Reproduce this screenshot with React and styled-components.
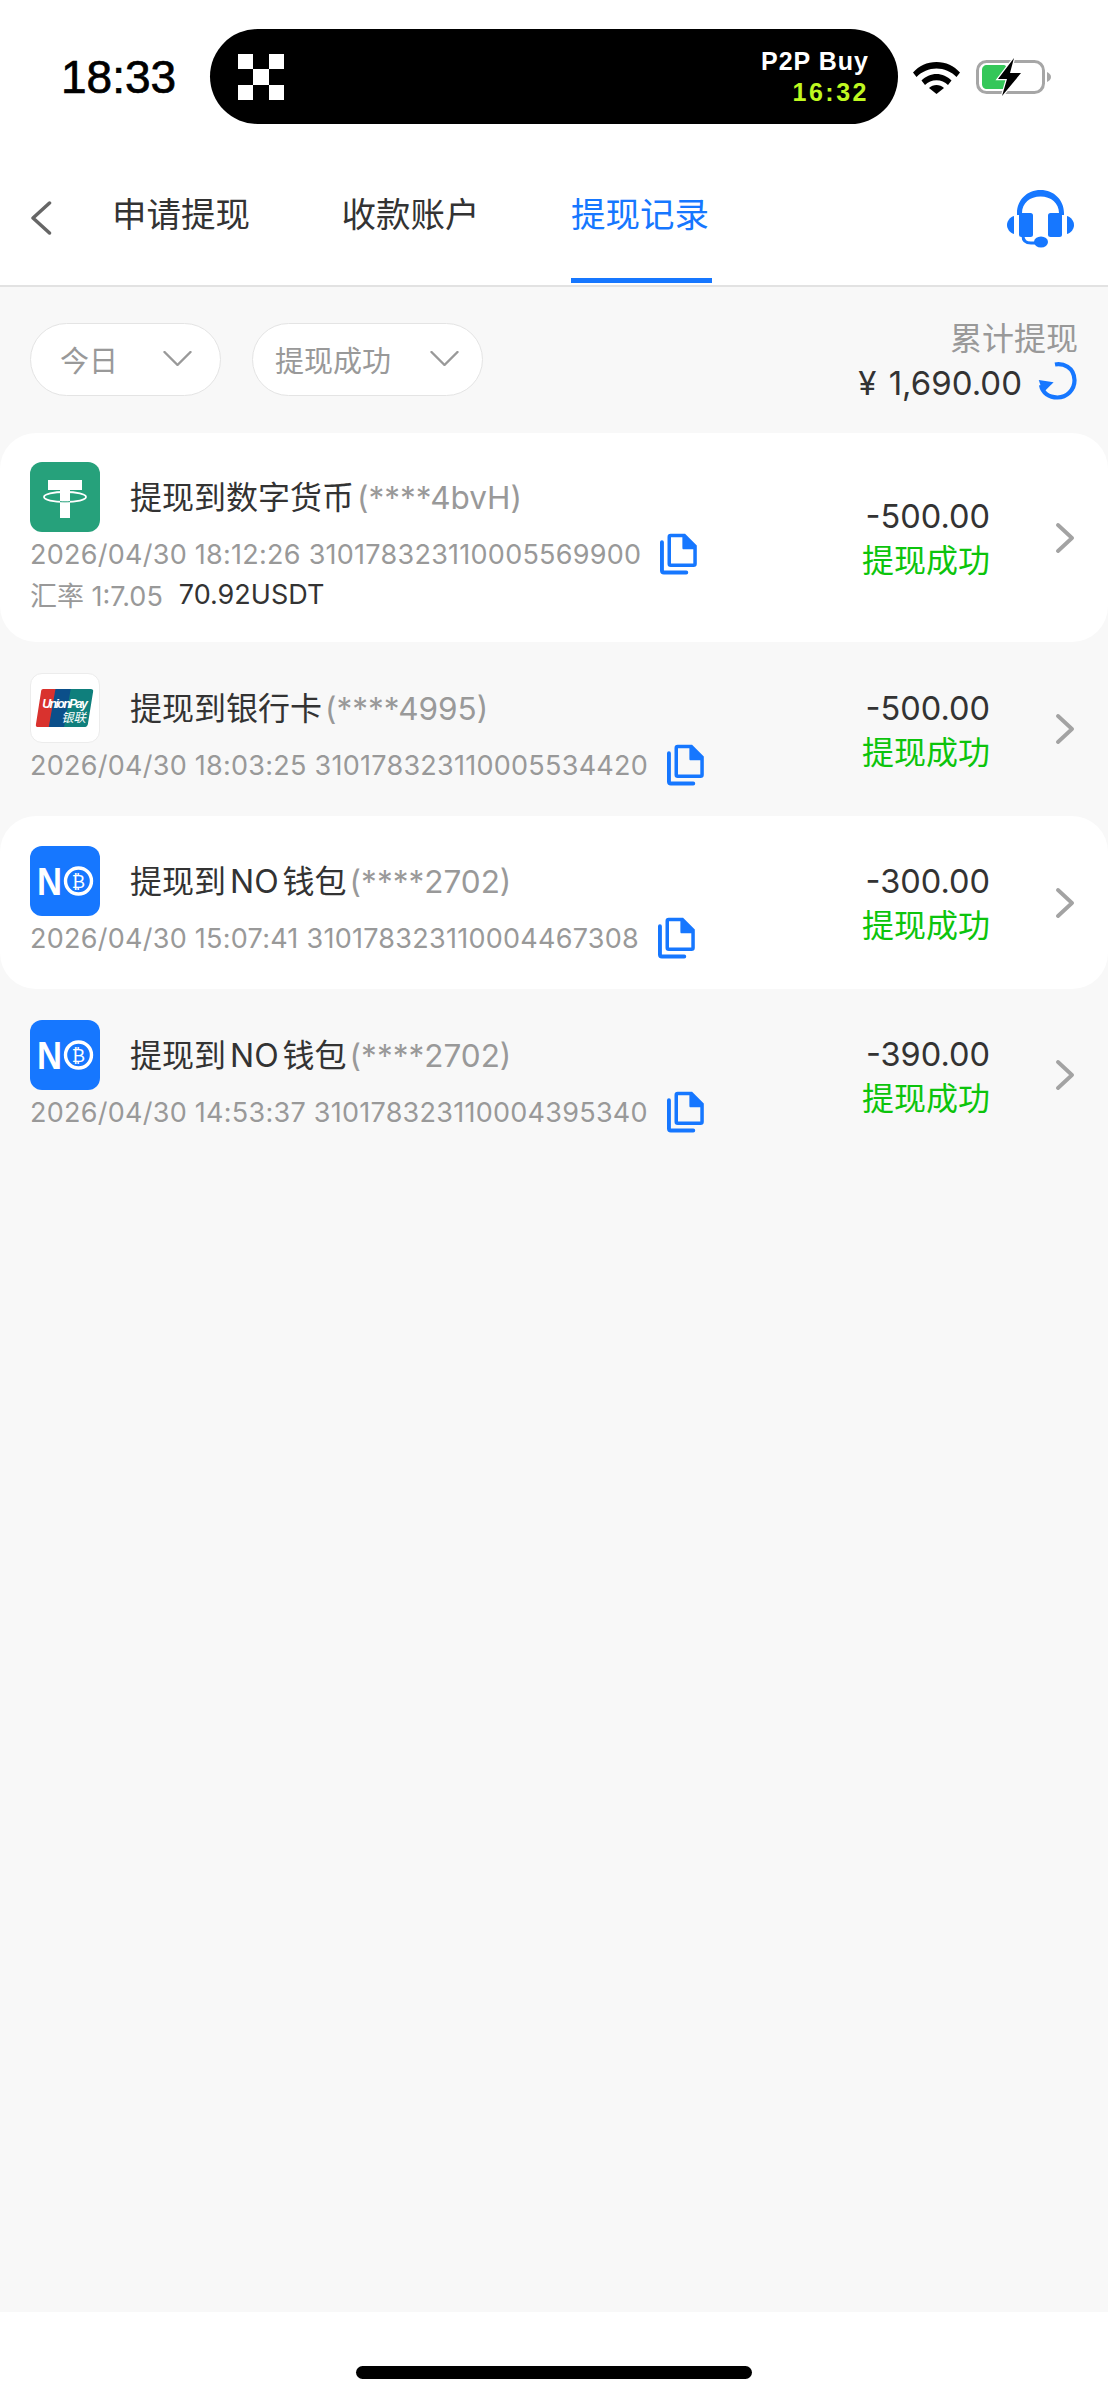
import React from 'react';
import styled, { createGlobalStyle } from 'styled-components';

const FONT = 'Inter, "Noto Sans CJK SC", sans-serif';
const BLUE = '#1677ff';

const Global = createGlobalStyle`
  html, body { margin: 0; padding: 0; background: #fff; }
  body { font-family: ${FONT}; }
  * { box-sizing: border-box; }
`;

const Page = styled.div`
  width: 1108px;
  min-height: 2400px;
  display: flex;
  flex-direction: column;
  background: #f8f8f8;
`;

const Top = styled.header`
  background: #fff;
  border-bottom: 2px solid #e2e2e2;
`;

const StatusBar = styled.div`
  height: 153px;
  display: flex;
  align-items: flex-start;
  padding-top: 29px;
`;

const Clock = styled.div`
  width: 210px;
  height: 95px;
  padding-left: 61px;
  display: flex;
  align-items: center;
  font-family: "Liberation Sans", sans-serif;
  font-size: 46px;
  color: #000;
  -webkit-text-stroke: 0.7px #000;
`;

const Island = styled.div`
  width: 688px;
  height: 95px;
  border-radius: 47.5px;
  background: #000;
  display: flex;
  align-items: center;
  justify-content: space-between;
  padding: 0 29px 0 28px;
`;

const LiveText = styled.div`
  display: flex;
  flex-direction: column;
  align-items: flex-end;
  gap: 3px;
`;

const LiveLine = styled.div`
  font-family: "Liberation Sans", sans-serif;
  font-size: 25px;
  line-height: 28px;
  font-weight: 700;
  letter-spacing: ${p => p.$ls}px;
  color: ${p => p.$color};
`;

const StatusIcons = styled.div`
  display: flex;
  align-items: center;
  height: 95px;
  padding-left: 15px;
  gap: 16px;
`;

const TabBar = styled.nav`
  height: 132px;
  display: flex;
  align-items: flex-start;
  padding: 0 34px 0 30px;
`;

const BackButton = styled.div`
  width: 82px;
  height: 84px;
  padding-top: 48px;
  display: flex;
`;

const Tabs = styled.div`
  display: flex;
  gap: 93.5px;
  flex: 1;
`;

const Tab = styled.div`
  width: ${p => (p.$active ? '141px' : '136px')};
  height: 130px;
  padding-top: 38px;
  font-size: 34.5px;
  line-height: 48px;
  white-space: nowrap;
  color: ${p => (p.$active ? BLUE : '#333')};
  border-bottom: 5px solid ${p => (p.$active ? BLUE : 'transparent')};
`;

const Support = styled.div`
  padding-top: 37px;
  display: flex;
`;

const FilterBar = styled.div`
  height: 146px;
  padding: 36px 30px 0;
  display: flex;
  justify-content: space-between;
  align-items: flex-start;
`;

const Filters = styled.div`
  display: flex;
  gap: 31px;
`;

const Filter = styled.div`
  height: 73px;
  width: ${p => p.$w}px;
  padding: 0 ${p => p.$pr}px 2px ${p => p.$pl}px;
  border-radius: 36.5px;
  background: #fff;
  border: 1.5px solid #e4e4e4;
  display: flex;
  align-items: center;
  justify-content: space-between;
  font-size: 29px;
  color: #999;
`;

const Total = styled.div`
  display: flex;
  flex-direction: column;
  align-items: flex-end;
  margin-top: -6px;
`;

const TotalLabel = styled.div`
  font-size: 32px;
  line-height: 44px;
  color: #999;
`;

const TotalValue = styled.div`
  display: flex;
  align-items: center;
  gap: 16px;
  font-size: 33px;
  line-height: 44px;
  word-spacing: 3px;
  color: #333;

  svg {
    margin: -6px 1px 0 0;
  }
`;

const Records = styled.main`
  flex: 1;
  display: flex;
  flex-direction: column;
`;

const Record = styled.article`
  height: ${p => p.$h}px;
  padding: ${p => p.$pt}px 33px 0 30px;
  display: flex;
  justify-content: space-between;
  background: ${p => (p.$white ? '#fff' : 'transparent')};
  border-radius: 36px;
`;

const RecordMain = styled.div`
  display: flex;
  flex-direction: column;
`;

const TitleRow = styled.div`
  display: flex;
  align-items: center;
  gap: 30px;
`;

const LogoBox = styled.div`
  width: 70px;
  height: 70px;
  border-radius: 12px;
  background: ${p => p.$bg};
  border: ${p => (p.$bordered ? '1px solid #ececec' : 'none')};
  display: flex;
  align-items: center;
  justify-content: center;
  overflow: hidden;
`;

const Title = styled.div`
  padding-top: 2px;
  font-size: 32px;
  line-height: 44px;
  color: #333;
  white-space: nowrap;
`;

const Latin = styled.span`
  margin: 0 4px;
`;

const Masked = styled.span`
  color: #999;
  margin-left: 3px;
  font-size: 31.5px;
`;

const Meta = styled.div`
  height: 42px;
  margin-top: 1px;
  display: flex;
  align-items: center;
  gap: 19px;
  font-size: 27px;
  letter-spacing: 0.26px;
  color: #999;
  white-space: nowrap;
`;

const Rate = styled.div`
  height: 38px;
  display: flex;
  align-items: center;
  gap: 16px;
  font-size: 27px;
  color: #999;
  white-space: nowrap;
`;

const RateValue = styled.span`
  color: #333;
`;

const RecordSide = styled.div`
  display: flex;
  align-items: center;
  gap: 65px;
  margin-top: ${p => -p.$pt}px;
`;

const AmountCol = styled.div`
  display: flex;
  flex-direction: column;
  align-items: flex-end;
  padding-top: 3px;
`;

const Amount = styled.div`
  font-size: 32.5px;
  line-height: 44px;
  color: #333;
`;

const State = styled.div`
  font-size: 32px;
  line-height: 44px;
  color: #0cc40c;
`;

const Arrow = styled.div`
  display: flex;
`;

const Footer = styled.footer`
  height: 88px;
  background: #fff;
  display: flex;
  justify-content: center;
  padding-top: 54px;
`;

const HomeBar = styled.div`
  width: 396px;
  height: 13px;
  border-radius: 7px;
  background: #000;
`;

const Checker = () => (
  <svg width="46" height="46" viewBox="0 0 3 3" shapeRendering="crispEdges">
    <path fill="#fff" d="M0 0h1v1H0zM2 0h1v1H2zM1 1h1v1H1zM0 2h1v1H0zM2 2h1v1H2z" />
  </svg>
);

const Wifi = () => (
  <svg width="47" height="34" viewBox="0 0 47 34">
    <path d="M0 12.500C6 6 14 2 23.500 2S41 6 47 12.500L43.500 17C38 11.500 31 8.500 23.500 8.500S9 11.500 3.500 17Z" fill="#000" />
    <path d="M8.500 20.500C12.500 16.500 18 14 23.500 14s11 2.500 15 6.500L35 25c-3-3-7-4.800-11.500-4.800S15 22 12 25Z" fill="#000" />
    <path d="M16 28c2-2 4.800-3 7.500-3s5.500 1 7.500 3L23.500 34Z" fill="#000" />
  </svg>
);

const Battery = () => (
  <svg width="76" height="38" viewBox="0 0 76 38">
    <rect x="1.500" y="3.500" width="66" height="31" rx="9" fill="none" stroke="#a6a6a6" strokeWidth="3" />
    <path d="M71 14c2.500 1 4 3 4 5s-1.500 4-4 5Z" fill="#a6a6a6" />
    <path d="M11 7h16c3 0 3 1 3 3v18c0 1-1 3-3 3H11c-3 0-5-2-5-5V12c0-3 2-5 5-5Z" fill="#34c759" />
    <path d="M38 0 22 21h9l-5 17 19-23H34Z" fill="#000" stroke="#fff" strokeWidth="2.500" paintOrder="stroke" />
  </svg>
);

const Back = () => (
  <svg width="22" height="34" viewBox="0 0 22 34" fill="none">
    <path d="M19.500 2 3 17l16.500 15" stroke="#666" strokeWidth="3.500" strokeLinecap="round" strokeLinejoin="round" />
  </svg>
);

const Headset = () => (
  <svg width="67" height="58" viewBox="0 0 67 58">
    <path d="M15 23V25H10V23C10 10 20 0 33.500 0S57 10 57 23V25H52V23C52 13 44 6.500 33.500 6.500S15 13 15 23Z" fill={BLUE} />
    <rect x="12" y="23" width="14" height="24" rx="2.500" fill={BLUE} />
    <rect x="41" y="23" width="14" height="24" rx="2.500" fill={BLUE} />
    <path d="M7 26V44C3 43 0 39 0 35S3 27 7 26Z" fill={BLUE} />
    <path d="M60 26V44C64 43 67 39 67 35S64 27 60 26Z" fill={BLUE} />
    <path d="M16 46c0 4 2 7 8 7h10" stroke={BLUE} strokeWidth="3" fill="none" />
    <ellipse cx="34" cy="52" rx="7" ry="5.500" fill={BLUE} />
  </svg>
);

const Chevron = () => (
  <svg width="29" height="15" viewBox="0 0 29 15" fill="none">
    <path d="M1.500 1 14.500 14 27.500 1" stroke="#999" strokeWidth="2.400" strokeLinecap="round" strokeLinejoin="round" />
  </svg>
);

const Refresh = () => (
  <svg width="39" height="39" viewBox="0 0 39 39" fill="none">
    <path d="M17 3.500C25 2 36 6 36.500 19c.3 10-8 17.500-17 17.500C11 36.500 4.500 32 3 24" stroke={BLUE} strokeWidth="4.200" />
    <path d="M0 20h15L6 32Z" fill={BLUE} transform="rotate(8 7 25)" />
  </svg>
);

const Copy = () => (
  <svg width="37" height="42" viewBox="0 0 38 42" fill="none">
    <path d="M2 9V38c0 1.500 1 2 2 2H27" stroke={BLUE} strokeWidth="4" strokeLinecap="round" />
    <path d="M11 2H25L36 13V31c0 1-.5 1.500-1.500 1.500H11c-1 0-1.500-.5-1.500-1.500V3.500C9.500 2.500 10 2 11 2Z" stroke={BLUE} strokeWidth="3.600" />
    <path d="M25 2 36 13V16H24c-.5 0-1-.5-1-1V2Z" fill={BLUE} />
  </svg>
);

const ArrowRight = () => (
  <svg width="20" height="30" viewBox="0 0 20 30" fill="none">
    <path d="M3 2 17 15 3 28" stroke="#a3a3a3" strokeWidth="3.800" strokeLinecap="round" strokeLinejoin="round" />
  </svg>
);

const TetherLogo = () => (
  <LogoBox $bg="#26a17b">
    <svg width="70" height="70" viewBox="0 0 70 70">
      <path d="M18 18H52V28H40V56H30V28H18Z" fill="#fff" />
      <ellipse cx="35" cy="35" rx="21" ry="5" fill="none" stroke="#fff" strokeWidth="1.800" />
      <path d="M30 39.600C32 39.900 38 39.900 40 39.600" stroke="#26a17b" strokeWidth="1" fill="none" />
    </svg>
  </LogoBox>
);

const UnionLogo = () => (
  <LogoBox $bg="#fff" $bordered>
    <svg width="60" height="40" viewBox="0 0 62 42">
      <path d="M8 1H24L17 41H3C1 41 0 40 .5 38L6 3C6 2 7 1 8 1Z" fill="#d9322e" />
      <path d="M21 1H41L34 41H14Z" fill="#0b4f8a" />
      <path d="M37 1H58C60 1 61 2 60.500 4L55 38C54.500 40 53 41 51 41H30Z" fill="#0f7f7c" />
      <text x="7" y="21" fontFamily="Liberation Sans" fontSize="13" fontStyle="italic" fontWeight="700" fill="#fff" textLength="48">UnionPay</text>
      <text x="27" y="36" fontFamily="Noto Sans CJK SC" fontSize="13" fontStyle="italic" fill="#fff">银联</text>
    </svg>
  </LogoBox>
);

const NoLogo = () => (
  <LogoBox $bg={BLUE}>
    <svg width="70" height="70" viewBox="0 0 70 70">
      <text x="7" y="49" fontFamily="Liberation Sans" fontSize="39" fontWeight="700" fill="#fff" textLength="25" lengthAdjust="spacingAndGlyphs">N</text>
      <circle cx="48.500" cy="35" r="13" fill="none" stroke="#fff" strokeWidth="3.400" />
      <text x="48.500" y="41.500" textAnchor="middle" fontFamily="Liberation Sans" fontSize="18" fontWeight="400" fill="#fff">₿</text>
    </svg>
  </LogoBox>
);

const records = [
  { h: 209, pt: 29, white: true, logo: <TetherLogo />, title: '提现到数字货币', mask: '(****4bvH)', meta: '2026/04/30 18:12:26 310178323110005569900', amount: '-500.00', rate: true },
  { h: 174, pt: 31, logo: <UnionLogo />, title: '提现到银行卡', mask: '(****4995)', meta: '2026/04/30 18:03:25 310178323110005534420', amount: '-500.00' },
  { h: 173, pt: 30, white: true, logo: <NoLogo />, title: <>提现到<Latin>NO</Latin>钱包</>, mask: '(****2702)', meta: '2026/04/30 15:07:41 310178323110004467308', amount: '-300.00' },
  { h: 172, pt: 31, logo: <NoLogo />, title: <>提现到<Latin>NO</Latin>钱包</>, mask: '(****2702)', meta: '2026/04/30 14:53:37 310178323110004395340', amount: '-390.00' },
];

export default function App() {
  return (
    <Page>
      <Global />
      <Top>
        <StatusBar>
          <Clock>18:33</Clock>
          <Island>
            <Checker />
            <LiveText>
              <LiveLine $color="#fff" $ls={1}>P2P Buy</LiveLine>
              <LiveLine $color="#bff820" $ls={2.5}>16:32</LiveLine>
            </LiveText>
          </Island>
          <StatusIcons>
            <Wifi />
            <Battery />
          </StatusIcons>
        </StatusBar>
        <TabBar>
          <BackButton><Back /></BackButton>
          <Tabs>
            <Tab>申请提现</Tab>
            <Tab>收款账户</Tab>
            <Tab $active>提现记录</Tab>
          </Tabs>
          <Support><Headset /></Support>
        </TabBar>
      </Top>
      <FilterBar>
        <Filters>
          <Filter $w={191} $pl={29} $pr={28}>今日<Chevron /></Filter>
          <Filter $w={231} $pl={22} $pr={23}>提现成功<Chevron /></Filter>
        </Filters>
        <Total>
          <TotalLabel>累计提现</TotalLabel>
          <TotalValue>¥ 1,690.00<Refresh /></TotalValue>
        </Total>
      </FilterBar>
      <Records>
        {records.map(r => (
          <Record key={r.meta} $h={r.h} $pt={r.pt} $white={r.white}>
            <RecordMain>
              <TitleRow>
                {r.logo}
                <Title>{r.title}<Masked>{r.mask}</Masked></Title>
              </TitleRow>
              <Meta>{r.meta}<Copy /></Meta>
              {r.rate && <Rate>汇率 1:7.05<RateValue>70.92USDT</RateValue></Rate>}
            </RecordMain>
            <RecordSide $pt={r.pt}>
              <AmountCol>
                <Amount>{r.amount}</Amount>
                <State>提现成功</State>
              </AmountCol>
              <Arrow><ArrowRight /></Arrow>
            </RecordSide>
          </Record>
        ))}
      </Records>
      <Footer><HomeBar /></Footer>
    </Page>
  );
}
